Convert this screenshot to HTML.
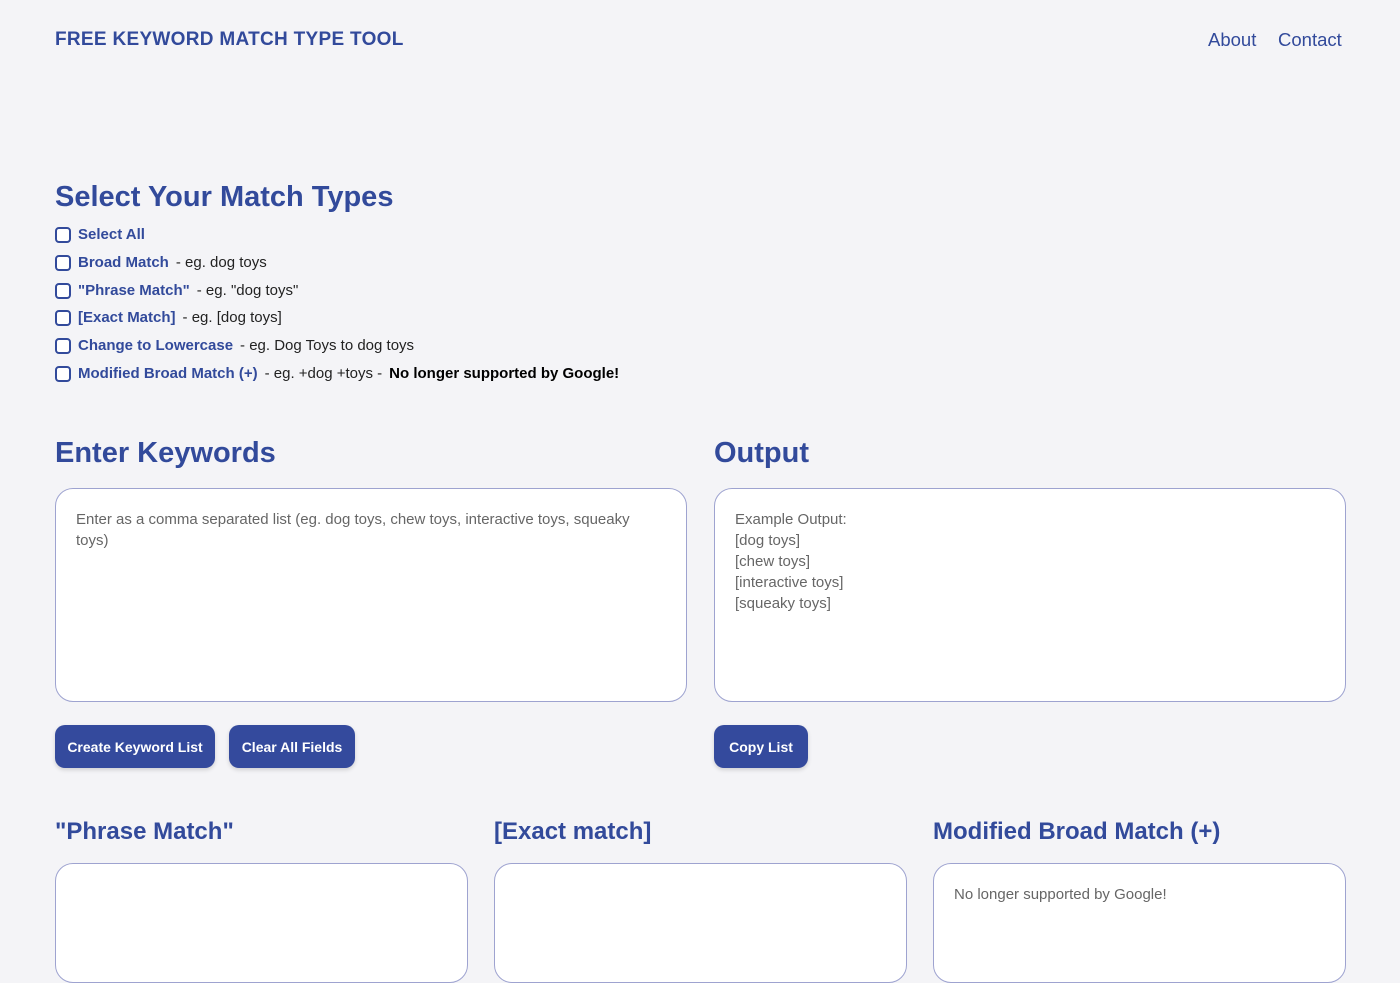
<!DOCTYPE html>
<html><head><meta charset="utf-8"><style>
*{box-sizing:border-box;margin:0;padding:0}
body{width:1400px;height:933px;overflow:hidden;background:#f4f4f7;font-family:"Liberation Sans",sans-serif;color:#324a9b;position:relative}
.a{position:absolute;white-space:nowrap}
.logo{left:55px;top:29px;font-size:19px;font-weight:700;letter-spacing:0.3px}
.nav{top:29px;font-size:18.5px}
h2{position:absolute;font-size:29px;font-weight:700;white-space:nowrap}
.row{position:absolute;left:55px;font-size:15px;display:flex;align-items:center;white-space:nowrap}
.cb{width:16px;height:16px;border:2px solid #324a9b;border-radius:4px;margin-right:7px;background:#fff}
.row b{font-weight:700;color:#324a9b}
.row span{color:#222;margin-left:7px}
.row strong{color:#000;margin-left:7px}
.box{position:absolute;background:#fff;border:1px solid #9ea3d0;border-radius:18px;padding:20px 20px;font-size:15px;color:#666;line-height:21px}
.btn{position:absolute;top:725px;height:43px;background:#344a9d;color:#fff;border-radius:10px;font-size:14px;font-weight:700;display:flex;align-items:center;justify-content:center;box-shadow:0 2px 4px rgba(0,0,0,.15)}
</style></head><body>
<div class="a logo">FREE KEYWORD MATCH TYPE TOOL</div>
<div class="a nav" style="left:1208px">About</div>
<div class="a nav" style="left:1278px">Contact</div>
<h2 style="left:55px;top:181px">Select Your Match Types</h2>
<div class="row" style="top:226px"><div class="cb"></div><b>Select All</b></div>
<div class="row" style="top:254px"><div class="cb"></div><b>Broad Match</b><span>- eg. dog toys</span></div>
<div class="row" style="top:282px"><div class="cb"></div><b>"Phrase Match"</b><span>- eg. "dog toys"</span></div>
<div class="row" style="top:309px"><div class="cb"></div><b>[Exact Match]</b><span>- eg. [dog toys]</span></div>
<div class="row" style="top:337px"><div class="cb"></div><b>Change to Lowercase</b><span>- eg. Dog Toys to dog toys</span></div>
<div class="row" style="top:365px"><div class="cb"></div><b>Modified Broad Match (+)</b><span>- eg. +dog +toys -</span><strong>No longer supported by Google!</strong></div>
<h2 style="left:55px;top:437px">Enter Keywords</h2>
<h2 style="left:714px;top:437px">Output</h2>
<div class="box" style="left:55px;top:488px;width:632px;height:214px;padding-right:40px">Enter as a comma separated list (eg. dog toys, chew toys, interactive toys, squeaky toys)</div>
<div class="box" style="left:714px;top:488px;width:632px;height:214px">Example Output:<br>[dog toys]<br>[chew toys]<br>[interactive toys]<br>[squeaky toys]</div>
<div class="btn" style="left:55px;width:160px">Create Keyword List</div>
<div class="btn" style="left:229px;width:126px">Clear All Fields</div>
<div class="btn" style="left:714px;width:94px">Copy List</div>
<h2 style="left:55px;top:818px;font-size:24px">"Phrase Match"</h2>
<h2 style="left:494px;top:818px;font-size:24px">[Exact match]</h2>
<h2 style="left:933px;top:818px;font-size:24px">Modified Broad Match (+)</h2>
<div class="box" style="left:55px;top:863px;width:413px;height:120px"></div>
<div class="box" style="left:494px;top:863px;width:413px;height:120px"></div>
<div class="box" style="left:933px;top:863px;width:413px;height:120px">No longer supported by Google!</div>
</body></html>
